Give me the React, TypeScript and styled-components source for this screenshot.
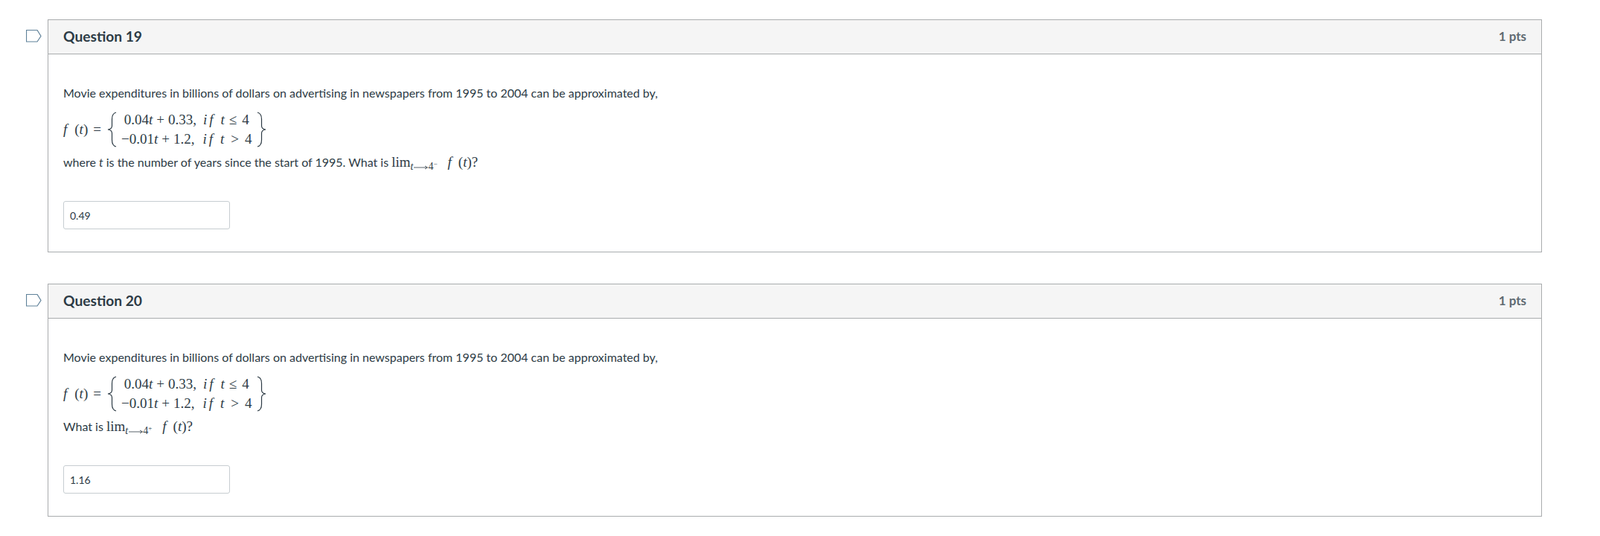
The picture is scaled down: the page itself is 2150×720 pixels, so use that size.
import React from 'react';
import styled, { createGlobalStyle } from 'styled-components';

const GlobalStyle = createGlobalStyle`
  html, body {
    margin: 0;
    padding: 0;
    background: #fff;
    color: #2d3b45;
    font-family: Lato, "Open Sans", sans-serif;
  }
`;

const Page = styled.div`
  width: 2150px;
  padding: 26px 0 0 35px;
  box-sizing: border-box;
`;

const QuestionRow = styled.div`
  display: flex;
  align-items: flex-start;
  margin-bottom: 42px;
`;

const FlagSlot = styled.div`
  width: 29px;
  flex: none;
  padding-top: 14px;
  line-height: 0;
`;

const Card = styled.section`
  width: 2008px;
  box-sizing: border-box;
  border: 1px solid #a9acae;
`;

const CardHeader = styled.header`
  display: flex;
  justify-content: space-between;
  align-items: center;
  height: 46px;
  padding: 0 20px 2px;
  box-sizing: border-box;
  background: #f5f5f5;
  border-bottom: 1px solid #a9acae;
`;

const Title = styled.h2`
  margin: 0;
  font-size: 19.2px;
  font-weight: 700;
  color: #2d3b45;
`;

const Points = styled.span`
  font-size: 17px;
  font-weight: 700;
  color: #5f6a72;
`;

const CardBody = styled.div`
  padding: 40px 20px 30px;
  font-size: 16px;
  line-height: 24px;
`;

const Paragraph = styled.p`
  margin: 0;
`;

const Display = styled.div`
  display: flex;
  align-items: center;
  height: 60px;
  margin: 7px 0 2px;
  font-family: "Liberation Serif", "Times New Roman", serif;
  font-size: 19px;
  color: #2d3b45;
`;

const Lhs = styled.span`
  width: 59px;
  flex: none;
  white-space: pre;
`;

const Cases = styled.div`
  display: grid;
  justify-items: center;
  row-gap: 2px;
  margin: 0 5px;
  line-height: 24px;
  white-space: pre;
`;

const Gap = styled.span<{ $w: number }>`
  display: inline-block;
  width: ${(p) => p.$w}px;
`;

const Serif = styled.span`
  font-family: "Liberation Serif", "Times New Roman", serif;
  font-size: 19px;
`;

const Sub = styled.span`
  font-size: 14px;
  line-height: 0;
  vertical-align: -4px;
`;

const Sup = styled.sup`
  font-size: 9px;
  line-height: 0;
  vertical-align: 5px;
`;

const ArrowSlot = styled.span`
  margin-left: 1px;
`;

const FlagIcon = () => (
  <svg width="21" height="17" viewBox="0 0 21 17" fill="none">
    <path d="M0.5 0.5 H15 L20 8.5 L15 16 H0.5 Z" fill="#fff" stroke="#5f8199" strokeWidth="1.2" />
  </svg>
);

const LeftBrace = () => (
  <svg width="14" height="48" viewBox="0 0 14 48" fill="none">
    <path
      d="M12 1 C8 2 6.5 5 6.5 10 V19 C6.5 22 5 23.5 1 24 C5 24.5 6.5 26 6.5 29 V38 C6.5 43 8 46 12 47"
      stroke="#2d3b45"
      strokeWidth="1.2"
    />
  </svg>
);

const RightBrace = () => (
  <svg width="14" height="48" viewBox="0 0 14 48" fill="none">
    <path
      d="M2 1 C6 2 7.5 5 7.5 10 V19 C7.5 22 9 23.5 13 24 C9 24.5 7.5 26 7.5 29 V38 C7.5 43 6 46 2 47"
      stroke="#2d3b45"
      strokeWidth="1.2"
    />
  </svg>
);

const LimitArrow = () => (
  <svg width="19" height="6" viewBox="0 0 19 6" fill="none">
    <path d="M0 3 H18 M15 1 L18.5 3 L15 5" stroke="#2d3b45" strokeWidth="0.8" />
  </svg>
);

const Piecewise = () => (
  <Display>
    <Lhs>
      <i>f</i>
      <Gap $w={10} />(<i>t</i>)<Gap $w={7} />=
    </Lhs>
    <LeftBrace />
    <Cases>
      <div>
        0.04<i>t</i>
        <Gap $w={5} />+<Gap $w={5} />
        0.33,
        <Gap $w={9} />
        <i>i</i>
        <Gap $w={3} />
        <i>f</i>
        <Gap $w={10} />
        <i>t</i>
        <Gap $w={6} />≤<Gap $w={7} />4
      </div>
      <div>
        −0.01<i>t</i>
        <Gap $w={5} />+<Gap $w={5} />
        1.2,
        <Gap $w={11} />
        <i>i</i>
        <Gap $w={3} />
        <i>f</i>
        <Gap $w={10} />
        <i>t</i>
        <Gap $w={9} />
        &gt;
        <Gap $w={8} />4
      </div>
    </Cases>
    <RightBrace />
  </Display>
);

const Limit = ({ side }: { side: string }) => (
  <Serif>
    lim
    <Sub>
      <i>t</i>
      <ArrowSlot>
        <LimitArrow />
      </ArrowSlot>
      4<Sup>{side}</Sup>
    </Sub>
    <Gap $w={14} />
    <i>f</i>
    <Gap $w={9} />(<i>t</i>)?
  </Serif>
);

const AnswerInput = styled.input`
  display: block;
  width: 224px;
  height: 38px;
  margin-top: 40px;
  padding: 0 8px;
  box-sizing: border-box;
  border: 1px solid #c7cdd1;
  border-radius: 3px;
  background: #fff;
  color: #2d3b45;
  font-family: Lato, sans-serif;
  font-size: 14px;
`;

const INTRO =
  'Movie expenditures in billions of dollars on advertising in newspapers from 1995 to 2004 can be approximated by,';

const questions = [
  {
    id: 19,
    answer: '0.49',
    prompt: (
      <>
        where <i>t</i> is the number of years since the start of 1995. What is <Limit side="−" />
      </>
    ),
  },
  {
    id: 20,
    answer: '1.16',
    prompt: (
      <>
        What is <Limit side="+" />
      </>
    ),
  },
];

export default function App() {
  return (
    <>
      <GlobalStyle />
      <Page>
        {questions.map((q) => (
          <QuestionRow key={q.id}>
            <FlagSlot>
              <FlagIcon />
            </FlagSlot>
            <Card>
              <CardHeader>
                <Title>Question {q.id}</Title>
                <Points>1 pts</Points>
              </CardHeader>
              <CardBody>
                <Paragraph>{INTRO}</Paragraph>
                <Piecewise />
                <Paragraph>{q.prompt}</Paragraph>
                <AnswerInput type="text" defaultValue={q.answer} readOnly />
              </CardBody>
            </Card>
          </QuestionRow>
        ))}
      </Page>
    </>
  );
}
